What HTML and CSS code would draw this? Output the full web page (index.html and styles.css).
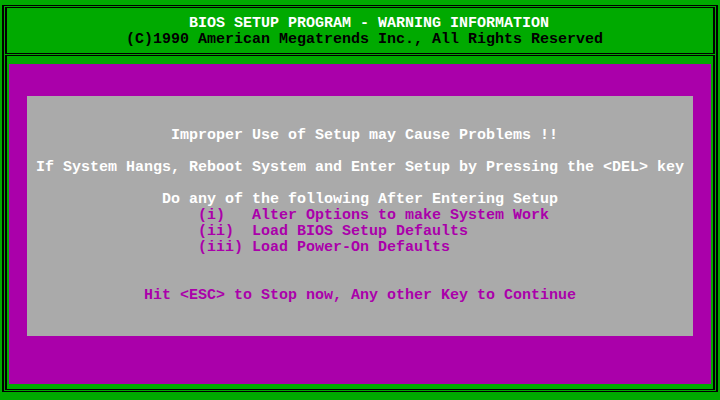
FILE: index.html
```html
<!DOCTYPE html>
<html>
<head>
<meta charset="utf-8">
<link rel="stylesheet" href="styles.css">
</head>
<body>
<div class="screen">
  <div class="frame">
    <div class="box head">
      <div class="line title">BIOS SETUP PROGRAM - WARNING INFORMATION</div>
      <div class="line copy">(C)1990 American Megatrends Inc., All Rights Reserved</div>
    </div>
    <div class="box main">
      <div class="panel">
        <div class="dialog">
          <div class="line white c16">Improper Use of Setup may Cause Problems !!</div>
          <div class="line blank"></div>
          <div class="line white c1">If System Hangs, Reboot System and Enter Setup by Pressing the &lt;DEL&gt; key</div>
          <div class="line blank"></div>
          <div class="line white c15">Do any of the following After Entering Setup</div>
          <div class="line magenta c19">(i)   Alter Options to make System Work</div>
          <div class="line magenta c19">(ii)  Load BIOS Setup Defaults</div>
          <div class="line magenta c19">(iii) Load Power-On Defaults</div>
          <div class="line blank"></div>
          <div class="line blank"></div>
          <div class="line magenta c13">Hit &lt;ESC&gt; to Stop now, Any other Key to Continue</div>
        </div>
      </div>
    </div>
  </div>
</div>
</body>
</html>
```

FILE: styles.css
```css
html, body {
  margin: 0;
  padding: 0;
  background: #00aa00;
}

.screen {
  width: 720px;
  height: 400px;
  background: #00aa00;
  padding: 5px 2px 0 2px;
  box-sizing: border-box;
  font-family: "Liberation Mono", "DejaVu Sans Mono", monospace;
  font-size: 15px;
  font-weight: bold;
  line-height: 16px;
}

.frame {
  width: 716px;
  height: 387px;
  box-sizing: border-box;
  border-style: solid;
  border-color: #000;
  border-width: 1px 2px;
  padding: 1px;
  display: flex;
  flex-direction: column;
  gap: 1px;
}

.box {
  box-sizing: border-box;
  border-style: solid;
  border-color: #000;
  border-width: 1px 2px;
}

.head {
  height: 47px;
  padding: 8px 0 5px 0;
}

.main {
  height: 335px;
  padding: 8px 2px 5px 2px;
}

.line {
  height: 16px;
  white-space: pre;
}

.title {
  color: #ffffff;
  padding-left: 182px;
}

.copy {
  color: #000000;
  padding-left: 119px;
}

.panel {
  width: 702px;
  height: 320px;
  box-sizing: border-box;
  background: #aa00aa;
  padding: 32px 18px 48px 18px;
}

.dialog {
  height: 240px;
  box-sizing: border-box;
  padding-top: 32px;
  background: #aaaaaa;
}

.white { color: #ffffff; }
.magenta { color: #aa00aa; }

.c1 { padding-left: 9px; }
.c13 { padding-left: 117px; }
.c15 { padding-left: 135px; }
.c16 { padding-left: 144px; }
.c19 { padding-left: 171px; }
```
